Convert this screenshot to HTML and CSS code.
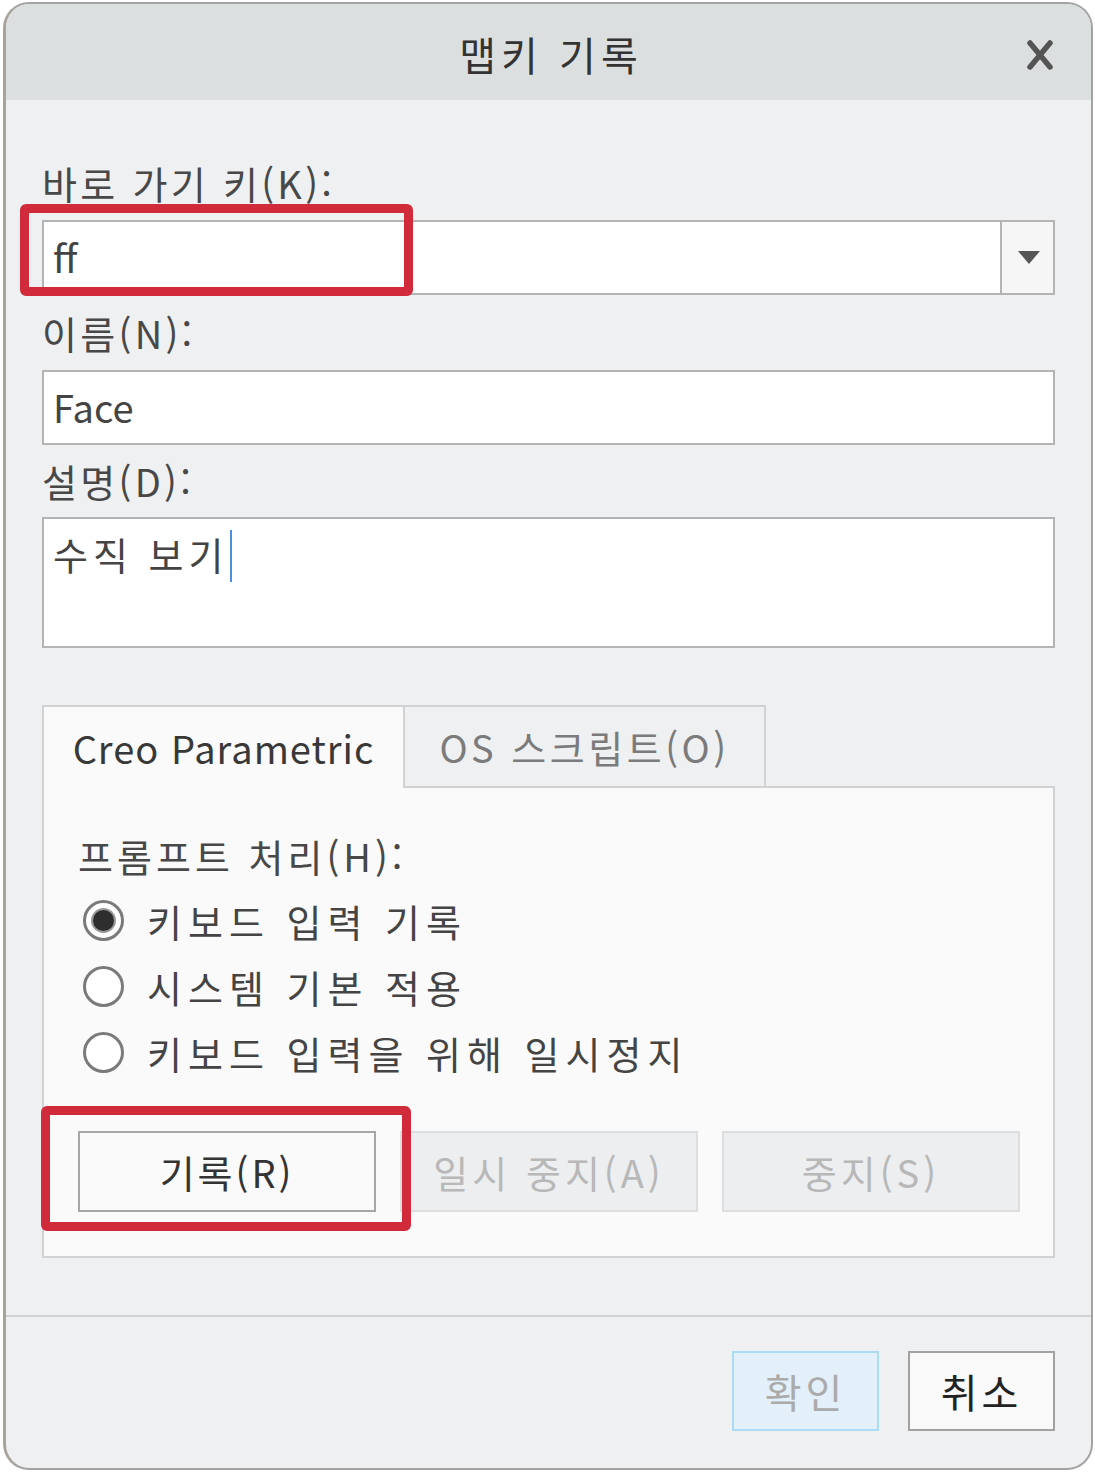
FILE: index.html
```html
<!DOCTYPE html>
<html lang="ko">
<head>
<meta charset="utf-8">
<title>맵키 기록</title>
<link rel="stylesheet" href="styles.css">
</head>
<body>
<div class="window">
  <div class="titlebar">
    <span class="title">맵키 기록</span>
    <svg class="close" viewBox="0 0 30 32" width="30" height="32" aria-hidden="true">
      <path d="M5 4 L25 28 M25 4 L5 28" stroke="#545454" stroke-width="5.5" stroke-linecap="round"/>
    </svg>
  </div>
  <div class="content">
    <div class="label">바로 가기 키(K):</div>
    <div class="combo">
      <div class="combo-text">ff</div>
      <div class="combo-btn">
        <svg viewBox="0 0 22 13" width="22" height="13" aria-hidden="true"><path d="M0 0 H22 L11 13 Z" fill="#555"/></svg>
      </div>
      <div class="highlight hl-combo"></div>
    </div>
    <div class="label">이름(N):</div>
    <div class="field">Face</div>
    <div class="label label-d">설명(D):</div>
    <div class="textarea"><span>수직 보기</span><span class="caret"></span></div>

    <div class="tabs">
      <div class="tab active">Creo Parametric</div>
      <div class="tab inactive">OS 스크립트(O)</div>
    </div>
    <div class="panel">
      <div class="panel-label">프롬프트 처리(H):</div>
      <div class="radio-row"><span class="radio checked"></span><span>키보드 입력 기록</span></div>
      <div class="radio-row"><span class="radio"></span><span>시스템 기본 적용</span></div>
      <div class="radio-row"><span class="radio"></span><span>키보드 입력을 위해 일시정지</span></div>
      <div class="actions">
        <div class="btn-wrap">
          <div class="btn">기록(R)</div>
          <div class="highlight hl-rec"></div>
        </div>
        <div class="btn disabled">일시 중지(A)</div>
        <div class="btn disabled">중지(S)</div>
      </div>
    </div>
  </div>
  <div class="separator"></div>
  <div class="footer">
    <div class="fbtn ok">확인</div>
    <div class="fbtn cancel">취소</div>
  </div>
</div>
</body>
</html>
```

FILE: styles.css
```css
* { box-sizing: border-box; }

html, body {
  margin: 0;
  padding: 0;
}

body {
  background: #ffffff;
  width: 1095px;
  height: 1472px;
  padding: 2px 2px 0 3px;
  font-family: "Noto Sans CJK KR", "Noto Sans", sans-serif;
  color: #424242;
}

.window {
  width: 1090px;
  height: 1468px;
  border: 2px solid #a3a3a3;
  border-left: 3px solid #a8a49c;
  border-radius: 26px;
  background: #eff0f2;
  overflow: hidden;
  display: flex;
  flex-direction: column;
}

.titlebar {
  height: 96px;
  background: #dcdfe0;
  display: flex;
  align-items: center;
  justify-content: center;
  position: relative;
  flex: none;
}

.title {
  font-size: 40px;
  color: #333;
  letter-spacing: 5px;
  margin: 4px 0 0 5px;
}

.close {
  position: absolute;
  right: 36px;
  top: 35px;
}

.content {
  padding: 45px 36px 0 36px;
  flex: none;
}

.label {
  height: 75px;
  line-height: 75px;
  font-size: 38px;
  color: #484848;
  letter-spacing: 3.3px;
  white-space: nowrap;
}

.label-d { height: 72px; line-height: 72px; }

.combo {
  position: relative;
  height: 75px;
  border: 2px solid #b4b4b4;
  background: #fff;
  display: flex;
}

.combo-text, .field {
  font-size: 38px;
  color: #444;
  padding-left: 9px;
  line-height: 70px;
}

.combo-text { flex: 1; }

.combo-btn {
  width: 53px;
  border-left: 2px solid #b4b4b4;
  background: #f6f6f6;
  display: flex;
  align-items: center;
  justify-content: center;
  padding-left: 2px;
}

.field {
  height: 75px;
  border: 2px solid #b4b4b4;
  background: #fff;
}

.textarea {
  height: 131px;
  border: 2px solid #b4b4b4;
  background: #fff;
  font-size: 38px;
  color: #444;
  padding: 4px 0 0 9px;
  line-height: 62px;
  letter-spacing: 5px;
  display: flex;
  align-items: flex-start;
}

.caret {
  display: inline-block;
  width: 2px;
  height: 52px;
  background: #4a8fe0;
  margin: 7px 0 0 2px;
}

.highlight {
  position: absolute;
  border: 9px solid #d12a3a;
  border-radius: 6px;
  pointer-events: none;
}

.hl-combo {
  left: -24px;
  top: -18px;
  width: 393px;
  height: 92px;
}

.tabs {
  margin-top: 57px;
  display: flex;
  align-items: flex-start;
}

.tab {
  height: 81px;
  font-size: 38px;
  display: flex;
  align-items: center;
  justify-content: center;
  white-space: nowrap;
  border: 2px solid #d0d2d4;
  border-bottom: none;
}

.tab.active {
  width: 363px;
  height: 83px;
  background: #fafafa;
  color: #383838;
  letter-spacing: 1px;
  margin-bottom: -2px;
  position: relative;
  z-index: 1;
}

.tab.inactive {
  width: 361px;
  border-left: none;
  background: #eff0f2;
  color: #7b7b7b;
  letter-spacing: 3.5px;
}

.panel {
  height: 472px;
  background: #fafafa;
  border: 2px solid #d0d2d4;
  padding: 37px 33px 0 34px;
}

.panel-label {
  height: 62px;
  line-height: 62px;
  font-size: 38px;
  color: #484848;
  letter-spacing: 4px;
}

.radio-row {
  height: 66px;
  display: flex;
  align-items: center;
  font-size: 38px;
  color: #444;
  letter-spacing: 6px;
  white-space: nowrap;
}

.radio {
  width: 41px;
  height: 41px;
  border-radius: 50%;
  border: 3px solid #7a7a7a;
  background: #fff;
  margin: 0 23px 0 5px;
  flex: none;
  display: flex;
  align-items: center;
  justify-content: center;
}

.radio.checked::after {
  content: "";
  width: 21px;
  height: 21px;
  border-radius: 50%;
  background: #2e2e2e;
  box-shadow: 0 0 0 2px #9a9a9a;
}

.actions {
  margin-top: 46px;
  display: flex;
  gap: 24px;
}

.btn-wrap {
  position: relative;
}

.btn {
  width: 298px;
  height: 81px;
  border: 2px solid #a6a6a6;
  background: #fafafa;
  font-size: 38px;
  color: #333;
  letter-spacing: 3px;
  display: flex;
  align-items: center;
  justify-content: center;
  white-space: nowrap;
}

.btn.disabled {
  background: #eceef0;
  border-color: #dcdee0;
  color: #b8b8b8;
  letter-spacing: 4px;
}

.hl-rec {
  left: -37px;
  top: -25px;
  width: 370px;
  height: 125px;
}

.separator {
  margin-top: 57px;
  height: 2px;
  background: #cfd1d3;
  flex: none;
}

.footer {
  display: flex;
  justify-content: flex-end;
  gap: 29px;
  padding: 34px 36px 0 0;
}

.fbtn {
  width: 147px;
  height: 80px;
  font-size: 40px;
  display: flex;
  align-items: center;
  justify-content: center;
  letter-spacing: 4px;
}

.fbtn.ok {
  background: #e3eff9;
  border: 2px solid #aadcf5;
  color: #ababab;
}

.fbtn.cancel {
  background: #f9f9f9;
  border: 2px solid #a2a2a2;
  color: #222;
}
```
